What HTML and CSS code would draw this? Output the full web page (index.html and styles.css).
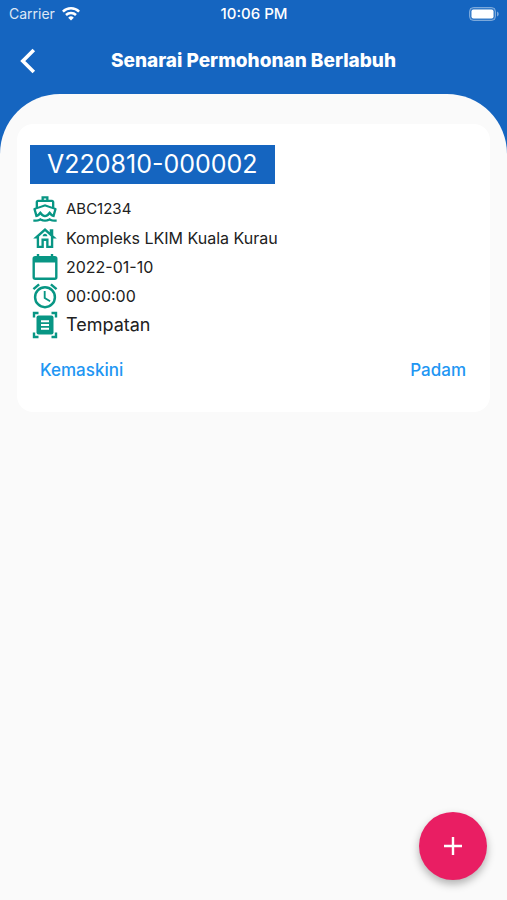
FILE: index.html
```html
<!DOCTYPE html>
<html lang="ms">
<head>
<meta charset="utf-8">
<meta name="viewport" content="width=device-width, initial-scale=1">
<title>Senarai Permohonan Berlabuh</title>
<link rel="stylesheet" href="styles.css">
</head>
<body>
<header class="header">
  <div class="status">
    <div class="carrier">
      <span>Carrier</span>
      <svg width="18" height="14" viewBox="0 0 18 14" fill="none" stroke="#fff" stroke-width="2.5"><path d="M.9 4.700a11.500 11.500 0 0 1 16.200 0M4 8a7.100 7.100 0 0 1 10 0"/><path d="M9 13.600 6.200 10.700a4 4 0 0 1 5.600 0Z" fill="#fff" stroke="none"/></svg>
    </div>
    <time class="clock">10:06 PM</time>
    <svg class="battery" width="30" height="14" viewBox="0 0 30 14"><rect x=".5" y=".5" width="26" height="13" rx="4" fill="#fff" fill-opacity=".15" stroke="#fff" stroke-opacity=".4"/><rect x="2.500" y="2.500" width="22" height="9" rx="2" fill="#fff"/><path d="M28 4.500c2.300 1 2.300 4 0 5Z" fill="#fff" fill-opacity=".45"/></svg>
  </div>
  <div class="bar">
    <button class="back" type="button" aria-label="Kembali"><svg width="16" height="26" viewBox="0 0 16 26" fill="none" stroke="#fff" stroke-width="3.600"><path d="M13.800 2 2.800 13l11 11"/></svg></button>
    <h1 class="title">Senarai Permohonan Berlabuh</h1>
  </div>
</header>
<div class="stage">
  <main class="sheet">
    <article class="card">
      <h2 class="number">V220810-000002</h2>
      <ul class="details">
        <li class="vessel"><svg class="icon" viewBox="1 0 22 24" fill="#089684"><path fill-rule="evenodd" d="M15 1H9v3H6c-1.100 0-2 .9-2 2v4.620l-1.290.42c-.26.08-.48.26-.6.5s-.15.52-.06.78L3.950 19H4c1.600 0 3.020-.88 4-2 .98 1.120 2.400 2 4 2s3.020-.88 4-2c.98 1.120 2.400 2 4 2h.05l1.900-6.680c.11-.37.04-1.060-.66-1.280L20 10.620V6c0-1.100-.9-2-2-2h-3V1ZM11 3h2v1h-2ZM6 9.970V6h12v3.970L12 8ZM16 13.680l-1.530 1.750C13.800 16.180 12.910 17 12 17s-1.800-.82-2.470-1.570L8 13.680l-1.530 1.750c-.29.33-.68.75-1.150 1.080l-1.180-4.160L12 9.790l7.860 2.560-1.180 4.160c-.47-.33-.86-.75-1.150-1.080Z"/><path d="M8 22.010c1.260.64 2.630.97 4 .97s2.740-.32 4-.97c1.260.65 2.620.99 4 .99h2v-2h-2c-1.390 0-2.780-.47-4-1.320-1.220.85-2.610 1.280-4 1.280s-2.780-.43-4-1.280C6.780 20.530 5.390 21 4 21H2v2h2c1.380 0 2.740-.35 4-.99Z"/></svg><span>ABC1234</span></li>
        <li><svg class="icon" viewBox="1 0 22 23" fill="#089684"><path fill-rule="evenodd" d="M19 9.300V4h-3v2.600L12 3 2 12h3v8h6v-6h2v6h6v-8h3ZM17 18h-2v-6H9v6H7v-7.810l5-4.500 5 4.500Z"/><path d="M10 10h4c0-1.100-.9-2-2-2s-2 .9-2 2Z"/></svg><span>Kompleks LKIM Kuala Kurau</span></li>
        <li><svg class="icon" viewBox="0 0 26 28" fill="none" stroke="#089684" stroke-width="2.400"><rect x="1.700" y="4.200" width="22.600" height="21.600" rx="1.500"/><path d="M1 4.500h24v5H1Z" fill="#089684" stroke="none"/><path d="M6 1v5M20 1v5"/></svg><span>2022-01-10</span></li>
        <li><svg class="icon" viewBox="1.500 1 21 22" fill="#089684"><path fill-rule="evenodd" d="m22 5.720-4.600-3.860-1.290 1.530 4.600 3.860ZM7.880 3.390 6.600 1.860 2 5.710l1.290 1.530ZM12.500 8H11v6l4.750 2.850.75-1.230-4-2.370ZM12 4a9 9 0 1 0 0 18 9 9 0 0 0 0-18Zm0 16a7 7 0 1 1 0-14 7 7 0 0 1 0 14Z"/></svg><span>00:00:00</span></li>
        <li class="kind"><svg class="icon" viewBox="0 0 26 28" fill="none" stroke="#089684" stroke-width="2.400"><path d="M2 6.500V2h4.500M19.500 2H24v4.500M24 21.500V26h-4.500M6.500 26H2v-4.500"/><rect x="4.500" y="4.500" width="17" height="19" rx="2" fill="#089684" stroke="none"/><path d="M9 10.200h8M9 14h8M9 17.800h8" stroke="#fff" stroke-width="2"/></svg><span>Tempatan</span></li>
      </ul>
      <div class="actions">
        <button type="button">Kemaskini</button>
        <button type="button">Padam</button>
      </div>
    </article>
  </main>
</div>
<button class="add" type="button" aria-label="Tambah"><svg width="18" height="18" viewBox="0 0 18 18" fill="none" stroke="#fff" stroke-width="2.400"><path d="M9 0v18M0 9h18"/></svg></button>
</body>
</html>
```
FILE: styles.css
```css
* {
  box-sizing: border-box;
}

body {
  margin: 0;
  min-height: 100vh;
  background: #fafafa;
  color: #212121;
  font-family: Inter, "Open Sans", sans-serif;
}

button {
  padding: 0;
  border: 0;
  background: none;
  font-family: inherit;
  cursor: pointer;
}

svg {
  display: block;
  flex: none;
}

.header {
  background: #1565c0;
  color: #fff;
}

.status {
  display: grid;
  grid-template-columns: 1fr auto 1fr;
  align-items: center;
  height: 27px;
  padding: 0 8px 0 9px;
  font-size: 14px;
}

.carrier {
  display: flex;
  align-items: center;
  gap: 7px;
}

.carrier span {
  opacity: .85;
}

.clock {
  font-size: 15px;
  font-weight: 500;
}

.battery {
  justify-self: end;
}

.bar {
  display: grid;
  grid-template-columns: 56px 1fr 56px;
  align-items: center;
  height: 67px;
}

.back {
  justify-self: center;
}

.title {
  margin: 0;
  font-size: 19px;
  font-weight: 800;
  line-height: 24px;
  text-align: center;
}

.stage {
  background: linear-gradient(#1565c0 60px, #fafafa 60px);
}

.sheet {
  padding: 30px 17px 17px;
  border-radius: 60px 60px 0 0;
  background: #fafafa;
}

.card {
  padding: 21px 13px 28px;
  border-radius: 16px;
  background: #fff;
}

.number {
  width: fit-content;
  margin: 0;
  padding: 0 17px;
  background: #1565c0;
  color: #fff;
  font-size: 25px;
  font-weight: 400;
  line-height: 39px;
}

.details {
  display: grid;
  gap: 1px;
  margin: 11px 0 0;
  padding: 0 0 0 2px;
  list-style: none;
  font-size: 16px;
  line-height: 28px;
}

.details li {
  display: flex;
  align-items: center;
  gap: 8px;
}

.details .vessel {
  font-size: 15px;
}

.details .kind {
  font-size: 18px;
}

.icon {
  width: 26px;
  height: 28px;
}

.actions {
  display: flex;
  justify-content: space-between;
  margin-top: 17px;
  padding: 0 11px 0 10px;
}

.actions button {
  color: #2196f3;
  font-size: 17px;
  font-weight: 500;
  line-height: 28px;
}

.add {
  position: fixed;
  right: 20px;
  bottom: 20px;
  display: grid;
  place-items: center;
  width: 68px;
  height: 68px;
  border-radius: 50%;
  background: #e91e63;
  box-shadow: 0 4px 8px rgba(0, 0, 0, .3);
}
```
